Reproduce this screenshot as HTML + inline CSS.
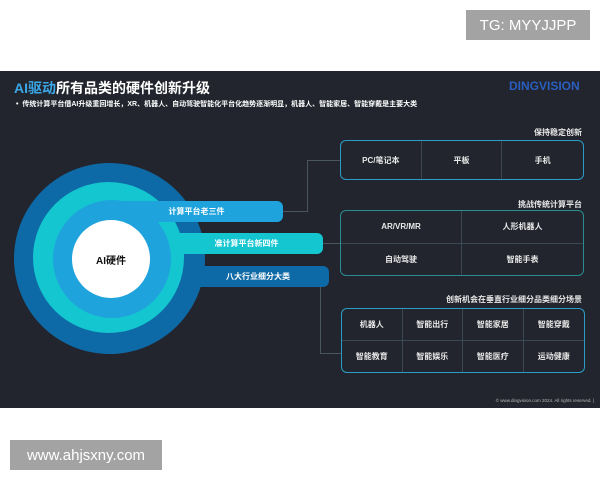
<!DOCTYPE html>
<html><head><meta charset="utf-8"><style>
*{margin:0;padding:0;box-sizing:border-box}
body{width:600px;height:480px;background:#fff;position:relative;overflow:hidden;font-family:"Liberation Sans","Noto Sans CJK SC",sans-serif}
.a{position:absolute}
.dark{left:0;top:71px;width:600px;height:337px;background:#22252d}
.c{border-radius:50%}
.bar{color:#fff;font-size:8px;font-weight:bold;display:flex;align-items:center;justify-content:center;border-radius:0 6px 6px 0}
.box{border:1.5px solid #2b9bc8;border-radius:6px;display:grid}
.box div{color:#e8e8e8;font-size:8px;font-weight:bold;display:flex;align-items:center;justify-content:center;border-right:1px solid #3a4a55;border-bottom:1px solid #3a4a55}
.lbl{color:#e8e8e8;font-size:8px;font-weight:bold;right:18px}
.ln{background:#4a5560}
</style></head><body>
<div class="a" style="left:466px;top:10px;width:124px;height:30px;background:#a3a3a3;color:#fff;font-size:15px;display:flex;align-items:center;justify-content:center">TG: MYYJJPP</div>
<div class="a dark"></div>
<div class="a" style="left:14px;top:78px;font-size:14px;font-weight:bold;color:#fff"><span style="color:#3aa8e8">AI驱动</span>所有品类的硬件创新升级</div>
<div class="a" style="left:509px;top:79px;font-size:12px;font-weight:bold;color:#2a5fc0">DINGVISION</div>
<div class="a" style="left:16px;top:99px;font-size:7px;font-weight:bold;color:#fff">•&nbsp; 传统计算平台借AI升级重回增长，XR、机器人、自动驾驶智能化平台化趋势逐渐明显，机器人、智能家居、智能穿戴是主要大类</div>
<div class="a c" style="left:14px;top:163px;width:191px;height:191px;background:#0e6aa6"></div>
<div class="a bar" style="left:110px;top:266px;width:219px;height:21px;background:#0e6aa6;padding-left:77px">八大行业细分大类</div>
<div class="a c" style="left:33px;top:182px;width:151px;height:151px;background:#14c6d0"></div>
<div class="a bar" style="left:110px;top:233px;width:213px;height:21px;background:#14c6d0;padding-left:60px">准计算平台新四件</div>
<div class="a c" style="left:53px;top:200px;width:118px;height:118px;background:#1fa3dc"></div>
<div class="a bar" style="left:110px;top:201px;width:173px;height:21px;background:#1fa3dc;padding-left:0px">计算平台老三件</div>
<div class="a c" style="left:72px;top:220px;width:78px;height:78px;background:#fff;color:#111;font-size:10px;font-weight:bold;display:flex;align-items:center;justify-content:center">AI硬件</div>
<div class="a ln" style="left:283px;top:211px;width:24px;height:1px"></div>
<div class="a ln" style="left:307px;top:160px;width:1px;height:52px"></div>
<div class="a ln" style="left:307px;top:160px;width:33px;height:1px"></div>
<div class="a ln" style="left:323px;top:243px;width:17px;height:1px"></div>
<div class="a ln" style="left:320px;top:287px;width:1px;height:67px"></div>
<div class="a ln" style="left:320px;top:353px;width:21px;height:1px"></div>
<div class="a lbl" style="top:127px">保持稳定创新</div>
<div class="a box" style="left:340px;top:140px;width:244px;height:40px;grid-template-columns:1fr 1fr 1fr">
<div style="border-bottom:0">PC/笔记本</div><div style="border-bottom:0">平板</div><div style="border:0">手机</div></div>
<div class="a lbl" style="top:199px">挑战传统计算平台</div>
<div class="a box" style="left:340px;top:210px;width:244px;height:66px;grid-template-columns:1fr 1fr;border-color:#2a8c90">
<div>AR/VR/MR</div><div style="border-right:0">人形机器人</div><div style="border-bottom:0">自动驾驶</div><div style="border:0">智能手表</div></div>
<div class="a lbl" style="top:294px">创新机会在垂直行业细分品类细分场景</div>
<div class="a box" style="left:341px;top:308px;width:244px;height:65px;grid-template-columns:1fr 1fr 1fr 1fr">
<div>机器人</div><div>智能出行</div><div>智能家居</div><div style="border-right:0">智能穿戴</div>
<div style="border-bottom:0">智能教育</div><div style="border-bottom:0">智能娱乐</div><div style="border-bottom:0">智能医疗</div><div style="border:0">运动健康</div></div>
<div class="a" style="right:6px;top:398px;font-size:4.5px;color:#bbb">© www.dingvision.com 2024. All rights reserved. |</div>
<div class="a" style="left:10px;top:440px;width:152px;height:30px;background:#a3a3a3;color:#fff;font-size:15px;display:flex;align-items:center;justify-content:center">www.ahjsxny.com</div>
</body></html>
